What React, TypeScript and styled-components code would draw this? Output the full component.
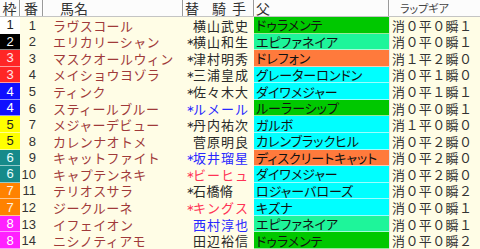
import React from "react";
import styled, { createGlobalStyle } from "styled-components";

const GlobalStyle = createGlobalStyle`
  html, body {
    margin: 0;
    padding: 0;
    background: #fffde6;
  }
  body {
    font-family: "Noto Sans CJK JP", "Liberation Sans", sans-serif;
  }
`;

const COLS = "20px 23px 140px 71px 135px 91px";

const wakuColors: Record<number, { bg: string; fg: string }> = {
  1: { bg: "#ffffff", fg: "#222222" },
  2: { bg: "#000000", fg: "#ffffff" },
  3: { bg: "#ff2626", fg: "#ffe8e8" },
  4: { bg: "#1010ff", fg: "#ffffff" },
  5: { bg: "#ffff00", fg: "#222222" },
  6: { bg: "#168a8a", fg: "#e8ffff" },
  7: { bg: "#ff8200", fg: "#fff2e0" },
  8: { bg: "#ff20ff", fg: "#ffffff" },
};

const lineColors = {
  kingmambo: "#00c800",
  roberto: "#1ef59a",
  stormcat: "#ff7a3c",
  sunday: "#00ffff",
};

const jockeyColors = {
  normal: "#2a2a2a",
  blue: "#2828ff",
  red: "#ff3355",
};

type Line = keyof typeof lineColors;
type JColor = keyof typeof jockeyColors;

type Runner = {
  waku: number;
  ban: number;
  horse: string;
  mark: boolean;
  jockey: string;
  jc: JColor;
  sire: string;
  line: Line;
  lap: string;
};

const runners: Runner[] = [
  { waku: 1, ban: 1, horse: "ラヴスコール", mark: false, jockey: "横山武史", jc: "normal", sire: "ドゥラメンテ", line: "kingmambo", lap: "消０平０瞬１" },
  { waku: 2, ban: 2, horse: "エリカリーシャン", mark: true, jockey: "横山和生", jc: "normal", sire: "エピファネイア", line: "roberto", lap: "消０平０瞬１" },
  { waku: 3, ban: 3, horse: "マスクオールウィン", mark: true, jockey: "津村明秀", jc: "normal", sire: "ドレフォン", line: "stormcat", lap: "消１平２瞬０" },
  { waku: 3, ban: 4, horse: "メイショウヨゾラ", mark: true, jockey: "三浦皇成", jc: "normal", sire: "グレーターロンドン", line: "sunday", lap: "消０平１瞬０" },
  { waku: 4, ban: 5, horse: "ティンク", mark: true, jockey: "佐々木大", jc: "normal", sire: "ダイワメジャー", line: "sunday", lap: "消０平１瞬１" },
  { waku: 4, ban: 6, horse: "スティールブルー", mark: true, jockey: "ルメール", jc: "blue", sire: "ルーラーシップ", line: "kingmambo", lap: "消０平０瞬１" },
  { waku: 5, ban: 7, horse: "メジャーデビュー", mark: true, jockey: "丹内祐次", jc: "normal", sire: "ガルボ", line: "sunday", lap: "消１平０瞬０" },
  { waku: 5, ban: 8, horse: "カレンナオトメ", mark: false, jockey: "菅原明良", jc: "normal", sire: "カレンブラックヒル", line: "sunday", lap: "消０平２瞬０" },
  { waku: 6, ban: 9, horse: "キャットファイト", mark: true, jockey: "坂井瑠星", jc: "blue", sire: "ディスクリートキャット", line: "stormcat", lap: "消０平２瞬０" },
  { waku: 6, ban: 10, horse: "キャプテンネキ", mark: true, jockey: "ビーヒュ", jc: "red", sire: "ダイワメジャー", line: "sunday", lap: "消０平２瞬０" },
  { waku: 7, ban: 11, horse: "テリオスサラ", mark: true, jockey: "石橋脩", jc: "normal", sire: "ロジャーバローズ", line: "sunday", lap: "消０平０瞬２" },
  { waku: 7, ban: 12, horse: "ジークルーネ", mark: true, jockey: "キングス", jc: "red", sire: "キズナ", line: "sunday", lap: "消０平０瞬１" },
  { waku: 8, ban: 13, horse: "イフェイオン", mark: false, jockey: "西村淳也", jc: "blue", sire: "エピファネイア", line: "roberto", lap: "消０平０瞬１" },
  { waku: 8, ban: 14, horse: "ニシノティアモ", mark: false, jockey: "田辺裕信", jc: "normal", sire: "ドゥラメンテ", line: "kingmambo", lap: "消０平０瞬２" },
];

const Table = styled.div`
  display: grid;
  grid-template-rows: 17px repeat(14, 1fr);
  width: 480px;
  height: 249px;
  overflow: hidden;
  background: #fffde6;
`;

const HeaderRow = styled.div`
  display: grid;
  grid-template-columns: ${COLS};
  background: #fcfcfc;
  border-bottom: 1px solid #c4c4c4;
`;

const HeadCell = styled.div<{ $align?: string; $pad?: number; $last?: boolean }>`
  display: flex;
  align-items: center;
  justify-content: ${(p) => p.$align || "flex-start"};
  padding-left: ${(p) => p.$pad || 0}px;
  border-right: ${(p) => (p.$last ? "none" : "1px solid #9a9a9a")};
  box-shadow: ${(p) => (p.$last ? "none" : "1px 0 0 #ffffff")};
  font-size: 14px;
  line-height: 16px;
  color: #333333;
  white-space: nowrap;
`;

const Spaced = styled.span<{ $gap: number }>`
  letter-spacing: ${(p) => p.$gap}px;
  margin-left: 13px;
`;

const SmallHead = styled.span`
  font-size: 11px;
  font-feature-settings: "palt";
  color: #444444;
`;

const Row = styled.div`
  display: grid;
  grid-template-columns: ${COLS};
  min-height: 0;
`;

const Cell = styled.div`
  display: flex;
  align-items: center;
  white-space: nowrap;
  font-size: 13px;
  line-height: 15px;
  min-height: 0;
`;

const WakuCell = styled(Cell)<{ $bg: string; $fg: string }>`
  justify-content: center;
  background: ${(p) => p.$bg};
  color: ${(p) => p.$fg};
  border-bottom: 1px solid rgba(255, 255, 255, 0.55);
  font-family: "Liberation Sans", "Noto Sans CJK JP", sans-serif;
`;

const BanCell = styled(Cell)`
  justify-content: flex-end;
  padding-right: 7px;
  color: #333333;
  font-family: "Liberation Sans", "Noto Sans CJK JP", sans-serif;
`;

const HorseCell = styled(Cell)`
  padding-left: 10px;
  color: #a03a3a;
  letter-spacing: 0.4px;
  overflow: hidden;
`;

const JockeyCell = styled(Cell)<{ $color: string }>`
  padding-left: 3px;
  color: ${(p) => p.$color};
`;

const Mark = styled.span`
  width: 7px;
  flex: none;
  font-family: "DejaVu Sans", sans-serif;
  font-size: 10px;
  text-align: center;
`;

const NameBox = styled.span<{ $spread: boolean }>`
  display: flex;
  justify-content: ${(p) => (p.$spread ? "space-between" : "flex-start")};
  width: ${(p) => (p.$spread ? "55px" : "auto")};
  letter-spacing: ${(p) => (p.$spread ? 0 : 0.4)}px;
`;

const SireCell = styled(Cell)<{ $bg: string }>`
  padding-left: 2px;
  background: ${(p) => p.$bg};
  color: #111111;
  border-bottom: 1px solid rgba(255, 255, 255, 0.6);
  font-feature-settings: "palt";
`;

const LapCell = styled(Cell)`
  padding-left: 2px;
  color: #333333;
  letter-spacing: 0.4px;
  border-left: 1px solid #e6e6e6;
`;

const App = () => {
  return (
    <>
      <GlobalStyle />
      <Table>
        <HeaderRow>
          <HeadCell $align="center">枠</HeadCell>
          <HeadCell $align="center">番</HeadCell>
          <HeadCell $pad={17}>馬名</HeadCell>
          <HeadCell $pad={2}>
            替<Spaced $gap={6}>騎手</Spaced>
          </HeadCell>
          <HeadCell $pad={2}>父</HeadCell>
          <HeadCell $pad={11} $last>
            <SmallHead>ラップギア</SmallHead>
          </HeadCell>
        </HeaderRow>
        {runners.map((r) => {
          const w = wakuColors[r.waku];
          const chars = Array.from(r.jockey);
          const spread = chars.length >= 4;
          return (
            <Row key={r.ban}>
              <WakuCell $bg={w.bg} $fg={w.fg}>
                {r.waku}
              </WakuCell>
              <BanCell>{r.ban}</BanCell>
              <HorseCell>{r.horse}</HorseCell>
              <JockeyCell $color={jockeyColors[r.jc]}>
                <Mark>{r.mark ? "∗" : ""}</Mark>
                <NameBox $spread={spread}>
                  {chars.map((c, i) => (
                    <span key={i}>{c}</span>
                  ))}
                </NameBox>
              </JockeyCell>
              <SireCell $bg={lineColors[r.line]}>{r.sire}</SireCell>
              <LapCell>{r.lap}</LapCell>
            </Row>
          );
        })}
      </Table>
    </>
  );
};

export default App;
